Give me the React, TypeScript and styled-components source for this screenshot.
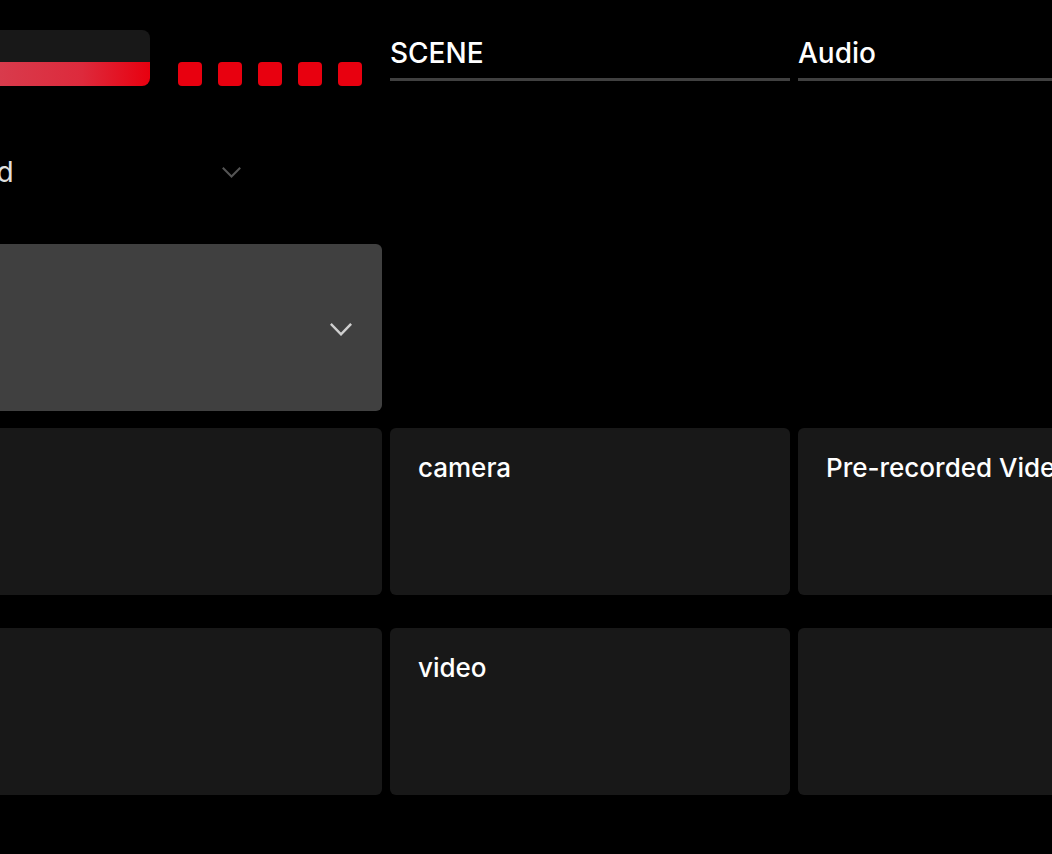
import styled, { createGlobalStyle } from "styled-components";

const GlobalStyle = createGlobalStyle`
  html, body {
    margin: 0;
    padding: 0;
    background: #000;
    overflow: hidden;
  }
  body {
    font-family: Inter, "Noto Sans", sans-serif;
    color: #fff;
  }
`;

const Board = styled.div`
  display: grid;
  grid-template-columns: 505px 400px 400px;
  grid-template-rows: 56px 124px 167px 183px 167px;
  column-gap: 8px;
  row-gap: 17px;
  margin-left: -123px;
  padding-top: 30px;
  width: max-content;
`;

const MeterRow = styled.div`
  display: flex;
  align-items: flex-end;
  gap: 28px;
`;

const Meter = styled.div`
  flex: 1;
  height: 56px;
  border-radius: 8px;
  overflow: hidden;
  display: flex;
  flex-direction: column;
`;

const MeterTrack = styled.div`
  flex: 1;
  background: #181818;
`;

const MeterFill = styled.div`
  height: 24px;
  background: linear-gradient(
    90deg,
    #d04558 0%,
    #d83b4c 45%,
    #dd2a3c 75%,
    #e8000f 100%
  );
`;

const Leds = styled.div`
  display: flex;
  gap: 16px;
  margin-right: 20px;
`;

const Led = styled.span`
  width: 24px;
  height: 24px;
  border-radius: 4px;
  background: #e8000f;
`;

const TabHeader = styled.div`
  display: flex;
  flex-direction: column;
  padding-top: 6px;
`;

const TabLabel = styled.span`
  font-size: 28px;
  line-height: 34px;
  font-weight: 500;
`;

const TabLine = styled.div`
  height: 3px;
  margin-top: 8px;
  background: #404040;
`;

const ModeSelect = styled.div`
  grid-column: 1;
  display: flex;
  align-items: center;
  justify-content: space-between;
  width: 374px;
  height: 34px;
  padding: 0 10px 0 17px;
  margin-top: 52px;
  box-sizing: border-box;
  font-size: 28px;
  color: #e0e0e0;
  font-weight: 400;
`;

const BigSelect = styled.div`
  grid-column: 1;
  display: flex;
  align-items: center;
  justify-content: flex-end;
  padding-right: 30px;
  padding-top: 4px;
  background: #404040;
  border-radius: 6px;
`;

const Tile = styled.div<{ $col: number }>`
  grid-column: ${(p) => p.$col};
  height: 167px;
  box-sizing: border-box;
  padding: 24px 28px;
  background: #181818;
  border-radius: 6px;
  font-size: 26px;
  font-weight: 500;
  white-space: nowrap;
  overflow: hidden;
`;

const Chevron = ({ w, h, color, stroke }: { w: number; h: number; color: string; stroke: number }) => (
  <svg width={w} height={h} viewBox={`0 0 ${w} ${h}`} fill="none">
    <polyline
      points={`${stroke / 2 + 0.5},${stroke / 2 + 0.5} ${w / 2},${h - stroke / 2 - 0.5} ${w - stroke / 2 - 0.5},${stroke / 2 + 0.5}`}
      stroke={color}
      strokeWidth={stroke}
      strokeLinecap="square"
    />
  </svg>
);

const tiles = [
  ["", "camera", "Pre-recorded Video"],
  ["", "video", ""],
];

export default function App() {
  return (
    <>
      <GlobalStyle />
      <Board>
        <MeterRow>
          <Meter>
            <MeterTrack />
            <MeterFill />
          </Meter>
          <Leds>
            {[0, 1, 2, 3, 4].map((i) => (
              <Led key={i} />
            ))}
          </Leds>
        </MeterRow>
        <TabHeader>
          <TabLabel>SCENE</TabLabel>
          <TabLine />
        </TabHeader>
        <TabHeader>
          <TabLabel>Audio</TabLabel>
          <TabLine />
        </TabHeader>

        <ModeSelect>
          <span>Standard</span>
          <Chevron w={19} h={11} color="#555" stroke={2} />
        </ModeSelect>

        <BigSelect>
          <Chevron w={22} h={13} color="#cfcfcf" stroke={2.5} />
        </BigSelect>

        {tiles.map((row, r) =>
          row.map((label, c) => (
            <Tile key={`${r}-${c}`} $col={c + 1}>
              {label}
            </Tile>
          ))
        )}
      </Board>
    </>
  );
}
